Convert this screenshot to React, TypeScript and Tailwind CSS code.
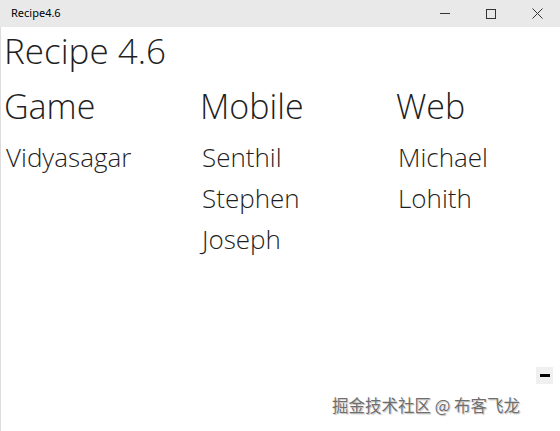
export default function App() {
  const columns = [
    { title: "Game", names: ["Vidyasagar"] },
    { title: "Mobile", names: ["Senthil", "Stephen", "Joseph"] },
    { title: "Web", names: ["Michael", "Lohith"] },
  ];

  return (
    <div className="flex h-[431px] w-[560px] flex-col overflow-hidden bg-white font-['Open_Sans',sans-serif]">
      {/* title bar */}
      <div className="flex h-[27px] shrink-0 items-center bg-[#e9e9e9]">
        <span className="pl-[11px] font-['Noto_Sans',sans-serif] text-[11px] text-black">Recipe4.6</span>
        <div className="ml-auto flex h-full items-center">
          <div className="flex h-full w-[46px] items-center justify-center">
            <div className="h-px w-[10px] bg-[#333]" />
          </div>
          <div className="flex h-full w-[46px] items-center justify-center">
            <div className="h-[10px] w-[10px] border border-[#333]" />
          </div>
          <div className="flex h-full w-[46px] items-center justify-center">
            <svg width="11" height="11" viewBox="0 0 11 11" stroke="#333" strokeWidth="1">
              <path d="M0.5 0.5 L10.5 10.5 M10.5 0.5 L0.5 10.5" />
            </svg>
          </div>
        </div>
      </div>

      {/* content */}
      <div className="relative flex flex-1 flex-col border-l border-[#dcdcdc] pl-[3px] text-[#1f1f1f]">
        <h1 className="text-[35px] font-light leading-[48px]">Recipe 4.6</h1>
        <div className="mt-[9px] flex">
          {columns.map((col) => (
            <div key={col.title} className="w-[196px] shrink-0">
              <h2 className="text-[34px] font-light leading-[44px]">{col.title}</h2>
              <ul className="mt-[9px] pl-[2px]">
                {col.names.map((n) => (
                  <li key={n} className="text-[26px] font-light leading-[41px]">
                    {n}
                  </li>
                ))}
              </ul>
            </div>
          ))}
        </div>

        <div className="mt-auto flex flex-col items-end pb-[13px] pr-[7px]">
          <div className="flex h-[17px] w-[17px] items-center justify-center bg-[#f0f0f0]">
            <div className="h-[3px] w-[10px] bg-black" />
          </div>
          <div className="mt-[9px] pr-[33px] font-['Noto_Sans_CJK_SC',sans-serif] text-[16.5px] text-[#6e6e6e] [text-shadow:0_0_1px_#fff,1px_1px_1px_#bbb]">
            掘金技术社区 @ 布客飞龙
          </div>
        </div>
      </div>
    </div>
  );
}
